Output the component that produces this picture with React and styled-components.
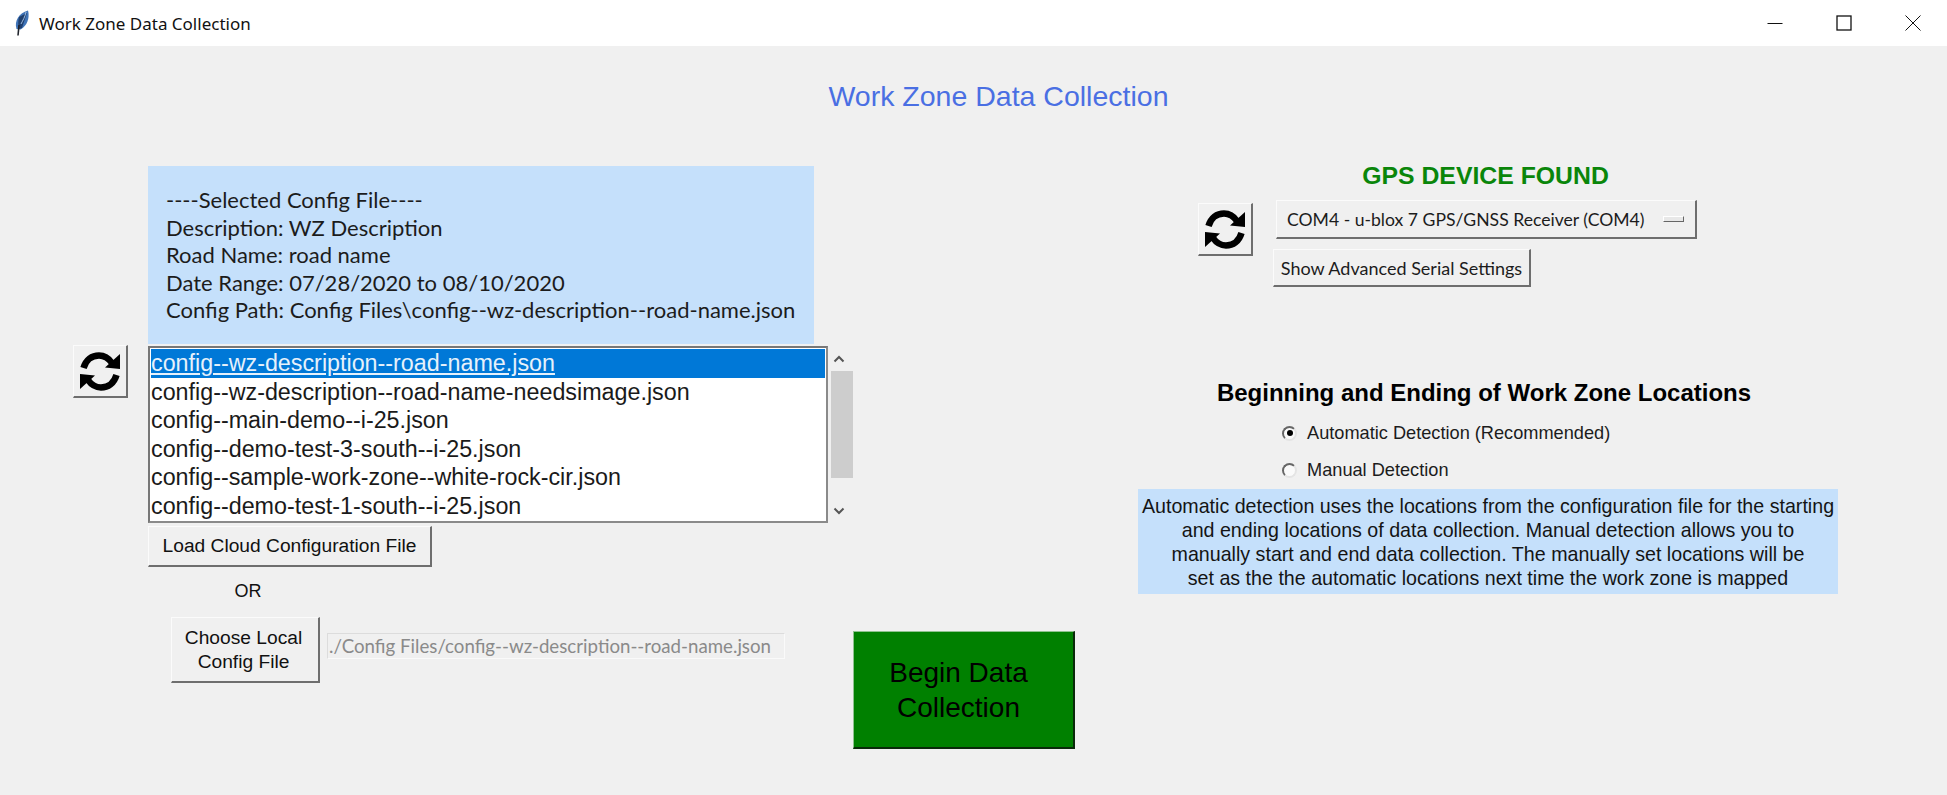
import React from 'react'
import styled, { createGlobalStyle, css } from 'styled-components'

const GlobalStyle = createGlobalStyle`
  html, body { margin: 0; padding: 0; background: #f0f0f0; overflow: hidden; }
  body { font-family: "Liberation Sans", Arial, sans-serif; color: #111; }
`

const raised = css`
  box-sizing: border-box;
  background: #f0f0f0;
  border-style: solid;
  border-width: 1px 2px 2px 1px;
  border-color: #fbfbfb #6e6e6e #6e6e6e #fbfbfb;
`

const Window = styled.div`
  width: 1947px;
  height: 795px;
  display: flex;
  flex-direction: column;
  overflow: hidden;
`

const TitleBar = styled.header`
  height: 46px;
  flex: none;
  background: #fff;
  display: flex;
  align-items: center;
  padding-left: 14px;
`

const AppTitle = styled.span`
  margin-left: 9px;
  font: 17px "Noto Sans", sans-serif;
  color: #111;
`

const WindowControls = styled.div`
  margin-left: auto;
  display: flex;
`

const ControlButton = styled.div`
  width: 69px;
  height: 46px;
  display: flex;
  align-items: center;
  justify-content: center;
`

const Heading = styled.h1`
  margin: 35px 0 49px;
  height: 30px;
  padding-left: 50px;
  text-align: center;
  font: 400 28.5px/30px "Liberation Sans", sans-serif;
  color: #4a6fe3;
`

const Columns = styled.main`
  display: flex;
  padding-left: 73px;
`

const LeftPane = styled.section`
  width: 780px;
  flex: none;
  padding-top: 6px;
  display: grid;
  grid-template-columns: 75px 1fr;
  grid-auto-rows: min-content;
`

const InfoPanel = styled.div`
  grid-column: 2;
  width: 666px;
  height: 178px;
  box-sizing: border-box;
  padding: 20px 18px;
  background: #c5e0fb;
  font: 400 22px/27.5px Lato, sans-serif;
  color: #1c1c1c;
  white-space: nowrap;
`

const RefreshButton = styled.button`
  ${raised}
  width: 55px;
  height: 53px;
  margin-top: 1px;
  padding: 0;
  display: flex;
  align-items: center;
  justify-content: center;
  color: #000;
`

const ListRow = styled.div`
  grid-column: 2;
  margin-top: 2px;
  display: flex;
`

const ListBox = styled.ul`
  width: 680px;
  height: 177px;
  box-sizing: border-box;
  margin: 0;
  padding: 1px;
  list-style: none;
  background: #fff;
  border-style: solid;
  border-width: 2px;
  border-color: #777 #8a8a8a #8a8a8a #777;
`

const ListItem = styled.li`
  height: 28.5px;
  font-size: 23.3px;
  line-height: 29px;
  white-space: nowrap;
  color: ${(p) => (p.$selected ? '#e6f1fb' : '#1a1a1a')};
  background: ${(p) => (p.$selected ? '#0078d7' : 'transparent')};
  text-decoration: ${(p) => (p.$selected ? 'underline' : 'none')};
`

const ScrollBar = styled.div`
  width: 25px;
  height: 177px;
  display: flex;
  flex-direction: column;
  justify-content: space-between;
`

const ScrollArrow = styled.div`
  height: 25px;
  display: flex;
  align-items: center;
  justify-content: center;
  padding-right: 3px;
`

const ScrollThumb = styled.div`
  height: 107px;
  margin: 0 0 20px 3px;
  background: #cdcdcd;
`

const CloudButton = styled.button`
  ${raised}
  grid-column: 2;
  justify-self: start;
  width: 284px;
  height: 41px;
  margin-top: 3px;
  padding: 0;
  font: 19.2px "Liberation Sans", sans-serif;
  color: #111;
`

const OrLabel = styled.div`
  grid-column: 2;
  width: 200px;
  margin-top: 13px;
  text-align: center;
  font-size: 18px;
  line-height: 22px;
  color: #111;
`

const LocalRow = styled.div`
  grid-column: 2;
  margin: 15px 0 0 23px;
  display: flex;
  align-items: center;
  gap: 7px;
`

const LocalButton = styled.button`
  ${raised}
  width: 149px;
  height: 66px;
  padding: 0 3px 0 0;
  font: 19.2px/24px "Liberation Sans", sans-serif;
  color: #111;
`

const PathField = styled.div`
  width: 458px;
  height: 26px;
  box-sizing: border-box;
  margin-bottom: 9px;
  padding-left: 1px;
  border: 1px solid #dcdcdc;
  border-right-color: #fafafa;
  border-bottom-color: #fafafa;
  font: 18.7px/24px Lato, sans-serif;
  color: #8a8a8a;
  white-space: nowrap;
  overflow: hidden;
`

const BeginButton = styled.button`
  ${raised}
  width: 222px;
  height: 118px;
  flex: none;
  margin-top: 471px;
  padding: 0 10px 0 0;
  background: #008000;
  border-color: #8fc28f #0a2a0a #0a2a0a #8fc28f;
  font: 28px/35px "Liberation Sans", sans-serif;
  color: #000;
`

const RightPane = styled.section`
  width: 700px;
  flex: none;
  margin-left: 63px;
  padding-top: 2px;
  display: flex;
  flex-direction: column;
`

const GpsStatus = styled.h2`
  margin: 0;
  padding-right: 5px;
  text-align: center;
  font: 700 24.8px/28px "Liberation Sans", sans-serif;
  color: #0a860a;
`

const GpsGrid = styled.div`
  margin: 10px 0 0 60px;
  display: grid;
  grid-template-columns: 55px auto;
  column-gap: 23px;
  row-gap: 10px;
  justify-content: start;
`

const GpsRefresh = styled(RefreshButton)`
  grid-row: 1 / span 2;
  margin-top: 3px;
`

const ComboButton = styled.div`
  ${raised}
  width: 421px;
  height: 39px;
  padding: 0 11px 0 10px;
  display: flex;
  align-items: center;
  justify-content: space-between;
  font: 400 17.6px Lato, sans-serif;
  color: #1c1c1c;
`

const ComboMark = styled.span`
  width: 21px;
  height: 6px;
  box-sizing: border-box;
  background: #e8e8e8;
  border: 1px solid;
  border-color: #fff #666 #666 #fff;
`

const AdvancedButton = styled.button`
  ${raised}
  grid-column: 2;
  justify-self: start;
  width: 258px;
  height: 38px;
  margin-left: -3px;
  padding: 0;
  font: 400 18px Lato, sans-serif;
  color: #1c1c1c;
`

const LocationsTitle = styled.h2`
  margin: 91px 0 0;
  padding-right: 8px;
  text-align: center;
  font: 700 24px/30px "Liberation Sans", sans-serif;
  color: #000;
`

const RadioGroup = styled.div`
  margin: 14px 0 0 144px;
  display: flex;
  flex-direction: column;
  gap: 15px;
`

const RadioRow = styled.label`
  height: 22px;
  display: flex;
  align-items: center;
  gap: 10px;
  font-size: 18.2px;
  color: #1c1c1c;
`

const RadioMark = styled.span`
  width: 15px;
  height: 15px;
  box-sizing: border-box;
  display: flex;
  align-items: center;
  justify-content: center;
  border-radius: 50%;
  border: 2px solid;
  border-color: #666 #e4e4e4 #e4e4e4 #666;
  background: #fafafa;
  &::after {
    content: '';
    width: 6px;
    height: 6px;
    border-radius: 50%;
    background: ${(p) => (p.$checked ? '#000' : 'transparent')};
  }
`

const HelpBox = styled.p`
  width: 700px;
  height: 105px;
  box-sizing: border-box;
  margin: 8px 0 0;
  padding-top: 5px;
  background: #c5e0fb;
  text-align: center;
  font-size: 19.65px;
  line-height: 24px;
  color: #141414;
  white-space: nowrap;
`

const FeatherIcon = () => (
  <svg width="16" height="26" viewBox="0 0 16 26">
    <path d="M2.5 19 C0 11 5 3 14 0.5 C16 8 13 16 6.5 19.5 Z" fill="#3f74b8" />
    <path d="M5 7 C4 11 4 15 5 19 L8 18 C9.5 13 11 9 13 3 Z" fill="#1f3f6e" />
    <path d="M12 2 C11 7 9 10 7 14" stroke="#9dbbe0" strokeWidth="1" fill="none" />
    <path d="M4 25.5 L5 15" stroke="#20242c" strokeWidth="1.6" />
  </svg>
)

const MinimizeIcon = () => (
  <svg width="16" height="16" viewBox="0 0 16 16">
    <path d="M0.5 8.5 H15.5" stroke="#111" strokeWidth="1" />
  </svg>
)

const MaximizeIcon = () => (
  <svg width="16" height="16" viewBox="0 0 16 16">
    <rect x="1" y="1" width="14" height="14" fill="none" stroke="#111" strokeWidth="1.3" />
  </svg>
)

const CloseIcon = () => (
  <svg width="16" height="16" viewBox="0 0 16 16">
    <path d="M0.5 0.5 L15.5 15.5 M15.5 0.5 L0.5 15.5" stroke="#111" strokeWidth="1" />
  </svg>
)

// two thick arcs, each with a filled arrow head, second one is the first turned round
const RefreshArrow = () => (
  <>
    <path d="M3.5 16 C6 7.5 12 3.5 19 3.5 C24 3.5 28.5 6 32 11" fill="none" stroke="#000" strokeWidth="6.5" />
    <path d="M40 2 L40 17 L25 15.5 Z" fill="#000" />
  </>
)

const RefreshIcon = () => (
  <svg width="40" height="39" viewBox="0 0 40 39">
    <RefreshArrow />
    <g transform="rotate(180 20 19.5)">
      <RefreshArrow />
    </g>
  </svg>
)

const Chevron = ({ up }) => (
  <svg width="12" height="8" viewBox="0 0 12 8">
    <path d={up ? 'M1.5 6.5 L6 2 L10.5 6.5' : 'M1.5 1.5 L6 6 L10.5 1.5'} fill="none" stroke="#555" strokeWidth="2" />
  </svg>
)

const configFiles = [
  'config--wz-description--road-name.json',
  'config--wz-description--road-name-needsimage.json',
  'config--main-demo--i-25.json',
  'config--demo-test-3-south--i-25.json',
  'config--sample-work-zone--white-rock-cir.json',
  'config--demo-test-1-south--i-25.json',
]

const App = () => {
  return (
    <Window>
      <GlobalStyle />
      <TitleBar>
        <FeatherIcon />
        <AppTitle>Work Zone Data Collection</AppTitle>
        <WindowControls>
          <ControlButton><MinimizeIcon /></ControlButton>
          <ControlButton><MaximizeIcon /></ControlButton>
          <ControlButton><CloseIcon /></ControlButton>
        </WindowControls>
      </TitleBar>

      <Heading>Work Zone Data Collection</Heading>

      <Columns>
        <LeftPane>
          <InfoPanel>
            ----Selected Config File----<br />
            Description: WZ Description<br />
            Road Name: road name<br />
            Date Range: 07/28/2020 to 08/10/2020<br />
            Config Path: Config Files\config--wz-description--road-name.json
          </InfoPanel>
          <RefreshButton><RefreshIcon /></RefreshButton>
          <ListRow>
            <ListBox>
              {configFiles.map((name, i) => (
                <ListItem key={name} $selected={i === 0}>{name}</ListItem>
              ))}
            </ListBox>
            <ScrollBar>
              <ScrollArrow><Chevron up /></ScrollArrow>
              <ScrollThumb />
              <ScrollArrow><Chevron /></ScrollArrow>
            </ScrollBar>
          </ListRow>
          <CloudButton>Load Cloud Configuration File</CloudButton>
          <OrLabel>OR</OrLabel>
          <LocalRow>
            <LocalButton>Choose Local<br />Config File</LocalButton>
            <PathField>./Config Files/config--wz-description--road-name.json</PathField>
          </LocalRow>
        </LeftPane>

        <BeginButton>Begin Data<br />Collection</BeginButton>

        <RightPane>
          <GpsStatus>GPS DEVICE FOUND</GpsStatus>
          <GpsGrid>
            <GpsRefresh><RefreshIcon /></GpsRefresh>
            <ComboButton>
              COM4 - u-blox 7 GPS/GNSS Receiver (COM4)
              <ComboMark />
            </ComboButton>
            <AdvancedButton>Show Advanced Serial Settings</AdvancedButton>
          </GpsGrid>
          <LocationsTitle>Beginning and Ending of Work Zone Locations</LocationsTitle>
          <RadioGroup>
            <RadioRow><RadioMark $checked />Automatic Detection (Recommended)</RadioRow>
            <RadioRow><RadioMark />Manual Detection</RadioRow>
          </RadioGroup>
          <HelpBox>
            Automatic detection uses the locations from the configuration file for the starting<br />
            and ending locations of data collection. Manual detection allows you to<br />
            manually start and end data collection. The manually set locations will be<br />
            set as the the automatic locations next time the work zone is mapped
          </HelpBox>
        </RightPane>
      </Columns>
    </Window>
  )
}

export default App
